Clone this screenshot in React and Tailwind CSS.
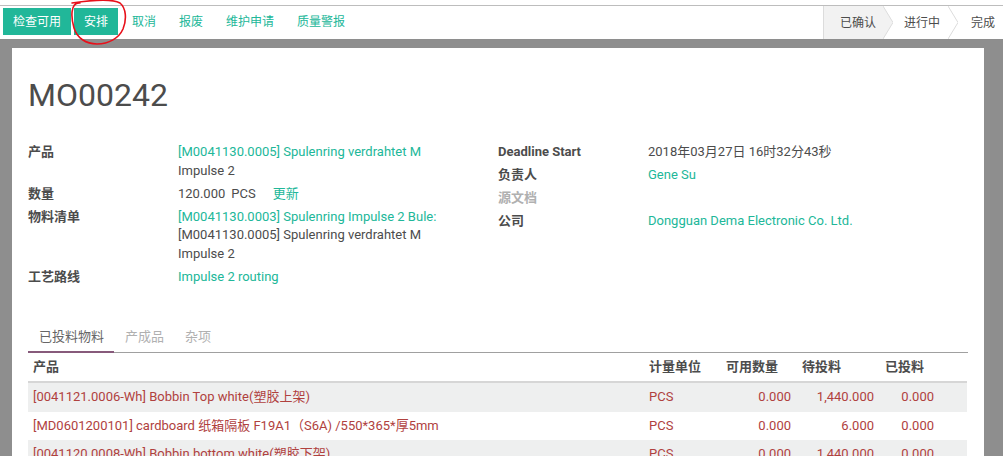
import React from "react";

const rows = [
  {
    name: "[0041121.0006-Wh] Bobbin Top white(塑胶上架)",
    uom: "PCS",
    avail: "0.000",
    todo: "1,440.000",
    done: "0.000",
  },
  {
    name: "[MD0601200101] cardboard 纸箱隔板 F19A1（S6A) /550*365*厚5mm",
    uom: "PCS",
    avail: "0.000",
    todo: "6.000",
    done: "0.000",
  },
  {
    name: "[0041120.0008-Wh] Bobbin bottom white(塑胶下架)",
    uom: "PCS",
    avail: "0.000",
    todo: "1,440.000",
    done: "0.000",
  },
];

const Chevron = ({ filled }) => (
  <svg width="10" height="33" viewBox="0 0 10 33" className="shrink-0">
    {filled && <polygon points="0,0 10,16.5 0,33" fill="#f2f2f2" />}
    <polyline points="0,0 10,16.5 0,33" fill="none" stroke="#dcdcdc" strokeWidth="1" />
  </svg>
);

export default function App() {
  return (
    <div className="relative w-[1003px] h-[456px] overflow-hidden bg-[#8e8e8e] font-[Roboto,'Noto_Sans_CJK_SC',sans-serif] text-[#4c4c4c]">
      {/* control panel */}
      <div className="bg-white pt-[5px]">
        <div className="h-[34px] border-t border-[#bdbdbd] flex justify-between">
          <div className="flex items-start pt-[2px] pl-[3px] gap-[3px] text-[12px] leading-[18px]">
            <button className="h-[27px] px-[10px] bg-[#21b799] text-white">检查可用</button>
            <button className="h-[27px] px-[10px] bg-[#21b799] text-white">安排</button>
            <button className="h-[27px] px-[10px] ml-[1px] text-[#21b799]">取消</button>
            <button className="h-[27px] px-[10px] text-[#21b799]">报废</button>
            <button className="h-[27px] px-[10px] text-[#21b799]">维护申请</button>
            <button className="h-[27px] px-[10px] text-[#21b799]">质量警报</button>
          </div>
          <div className="flex h-[33px] text-[12px] text-[#4c4c4c]">
            <div className="flex items-center bg-[#f2f2f2] border-l border-[#dcdcdc] pl-[16px] pr-[7px]">已确认</div>
            <Chevron filled />
            <div className="flex items-center pl-[11px] pr-[8px]">进行中</div>
            <Chevron />
            <div className="flex items-center pl-[13px] pr-[8px]">完成</div>
          </div>
        </div>
      </div>

      {/* sheet */}
      <div className="ml-[12px] mt-[9px] w-[972px] bg-white px-[16px] pt-[27px] pb-10 text-[13px] leading-[18.57px]">
        <h1 className="text-[32px] leading-[40px] font-normal text-[#4c4c4c]">MO00242</h1>

        <div className="grid grid-cols-2 mt-[28px]">
          <div>
            <div className="grid grid-cols-[150px_1fr] pb-[5px]">
              <div className="font-bold">产品</div>
              <div>
                <div className="text-[#21b799]">[M0041130.0005] Spulenring verdrahtet M</div>
                <div>Impulse 2</div>
              </div>
            </div>
            <div className="grid grid-cols-[150px_1fr] pb-[4px]">
              <div className="font-bold">数量</div>
              <div className="flex">
                <span>120.000</span>
                <span className="ml-[6px]">PCS</span>
                <span className="ml-[17px] text-[#21b799]">更新</span>
              </div>
            </div>
            <div className="grid grid-cols-[150px_1fr] pb-[5px]">
              <div className="font-bold">物料清单</div>
              <div>
                <div className="text-[#21b799]">[M0041130.0003] Spulenring Impulse 2 Bule:</div>
                <div>[M0041130.0005] Spulenring verdrahtet M</div>
                <div>Impulse 2</div>
              </div>
            </div>
            <div className="grid grid-cols-[150px_1fr]">
              <div className="font-bold">工艺路线</div>
              <div className="text-[#21b799]">Impulse 2 routing</div>
            </div>
          </div>

          <div>
            <div className="grid grid-cols-[150px_1fr] pb-[4.5px]">
              <div className="font-bold">Deadline Start</div>
              <div>2018年03月27日 16时32分43秒</div>
            </div>
            <div className="grid grid-cols-[150px_1fr] pb-[4.5px]">
              <div className="font-bold">负责人</div>
              <div className="text-[#21b799]">Gene Su</div>
            </div>
            <div className="grid grid-cols-[150px_1fr] pb-[4.5px]">
              <div className="font-bold text-[#b0b0b0]">源文档</div>
              <div></div>
            </div>
            <div className="grid grid-cols-[150px_1fr]">
              <div className="font-bold">公司</div>
              <div className="text-[#21b799]">Dongguan Dema Electronic Co. Ltd.</div>
            </div>
          </div>
        </div>

        {/* tabs */}
        <div className="mt-[36px] flex border-b border-[#a0a0a0]">
          <div className="pl-[11px] pr-[10px] pt-[5px] pb-[4px] border-b-2 border-[#875a7b] -mb-[1px] text-[#666666]">已投料物料</div>
          <div className="pl-[11px] pr-[10px] pt-[5px] pb-[5px] text-[#b0b0b0]">产成品</div>
          <div className="pl-[11px] pr-[10px] pt-[5px] pb-[5px] text-[#b0b0b0]">杂项</div>
        </div>

        <table className="w-[939px] table-fixed border-collapse">
          <colgroup>
            <col className="w-[616px]" />
            <col className="w-[77px]" />
            <col className="w-[76px]" />
            <col className="w-[83px]" />
            <col className="w-[60px]" />
            <col className="w-[27px]" />
          </colgroup>
          <thead>
            <tr className="border-b-2 border-[#d6d6d6] font-bold text-left">
              <th className="pl-[5px] py-[5px] font-bold">产品</th>
              <th className="pl-[5px] py-[5px] font-bold">计量单位</th>
              <th className="pl-[5px] py-[5px] font-bold">可用数量</th>
              <th className="pl-[5px] py-[5px] font-bold">待投料</th>
              <th className="pl-[5px] py-[5px] font-bold">已投料</th>
              <th></th>
            </tr>
          </thead>
          <tbody className="text-[#b0413e]">
            {rows.map((r, i) => (
              <tr key={i} className={i % 2 === 0 ? "bg-[#eeefef]" : "bg-white"}>
                <td className="pl-[5px] py-[5px] whitespace-nowrap">{r.name}</td>
                <td className="pl-[5px] py-[5px]">{r.uom}</td>
                <td className="pr-[6px] py-[5px] text-right">{r.avail}</td>
                <td className="pr-[6px] py-[5px] text-right">{r.todo}</td>
                <td className="pr-[6px] py-[5px] text-right">{r.done}</td>
                <td></td>
              </tr>
            ))}
          </tbody>
        </table>
      </div>

      {/* red hand-drawn circle */}
      <svg className="absolute left-0 top-0 pointer-events-none" width="140" height="50" viewBox="0 0 140 50">
        <path
          d="M80 3 C 70 2, 71 18, 74 28 C 77 38, 86 44, 97 44 C 109 44, 119 38, 123 29 C 127 19, 126 8, 120 3 C 113 -1, 92 0, 72 3"
          fill="none"
          stroke="#e8101a"
          strokeWidth="1.6"
          strokeLinecap="round"
        />
      </svg>
    </div>
  );
}
